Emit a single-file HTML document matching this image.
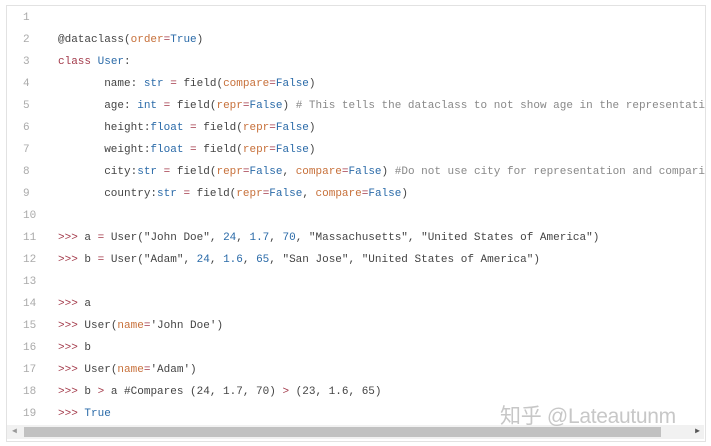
<!DOCTYPE html>
<html><head><meta charset="utf-8"><style>
body{margin:0;width:711px;height:446px;background:#fff;overflow:hidden;position:relative;font-family:"Liberation Mono",monospace;font-size:11px;color:#444}
.box{position:absolute;left:6px;top:5px;width:698px;height:435px;border:1px solid #e2e2e2;background:#fff;overflow:hidden}
.ln{position:absolute;left:0;width:1000px;height:22px;line-height:22px;white-space:pre}
.n{position:absolute;left:16px;color:#aaa;width:16px}
.c{position:absolute;left:51px}
.k{color:#a33a4a}.o{color:#c7703a}.b{color:#2a6aa8}.m{color:#888}
.sb{position:absolute;left:7px;top:425px;width:697px;height:14px;background:#f1f1f1}
.th{position:absolute;left:17px;top:2px;width:637px;height:10px;background:#c1c1c1}
.wm{position:absolute;left:500px;top:400px;font-family:"Liberation Sans","Noto Sans CJK SC",sans-serif;font-size:21px;letter-spacing:-0.3px;color:rgba(175,175,175,0.7)}
</style></head><body>
<div class="box">
<div class="ln" style="top:1px"><span class="n">1</span></div>
<div class="ln" style="top:23px"><span class="n">2</span><span class="c">@dataclass(<span class="o">order</span><span class="k">=</span><span class="b">True</span>)</span></div>
<div class="ln" style="top:45px"><span class="n">3</span><span class="c"><span class="k">class</span> <span class="b">User</span>:</span></div>
<div class="ln" style="top:67px"><span class="n">4</span><span class="c">       name: <span class="b">str</span> <span class="k">=</span> field(<span class="o">compare</span><span class="k">=</span><span class="b">False</span>)</span></div>
<div class="ln" style="top:89px"><span class="n">5</span><span class="c">       age: <span class="b">int</span> <span class="k">=</span> field(<span class="o">repr</span><span class="k">=</span><span class="b">False</span>) <span class="m"># This tells the dataclass to not show age in the representation</span></span></div>
<div class="ln" style="top:111px"><span class="n">6</span><span class="c">       height:<span class="b">float</span> <span class="k">=</span> field(<span class="o">repr</span><span class="k">=</span><span class="b">False</span>)</span></div>
<div class="ln" style="top:133px"><span class="n">7</span><span class="c">       weight:<span class="b">float</span> <span class="k">=</span> field(<span class="o">repr</span><span class="k">=</span><span class="b">False</span>)</span></div>
<div class="ln" style="top:155px"><span class="n">8</span><span class="c">       city:<span class="b">str</span> <span class="k">=</span> field(<span class="o">repr</span><span class="k">=</span><span class="b">False</span>, <span class="o">compare</span><span class="k">=</span><span class="b">False</span>) <span class="m">#Do not use city for representation and comparison</span></span></div>
<div class="ln" style="top:177px"><span class="n">9</span><span class="c">       country:<span class="b">str</span> <span class="k">=</span> field(<span class="o">repr</span><span class="k">=</span><span class="b">False</span>, <span class="o">compare</span><span class="k">=</span><span class="b">False</span>)</span></div>
<div class="ln" style="top:199px"><span class="n">10</span></div>
<div class="ln" style="top:221px"><span class="n">11</span><span class="c"><span class="k">&gt;&gt;&gt;</span> a <span class="k">=</span> User("John Doe", <span class="b">24</span>, <span class="b">1.7</span>, <span class="b">70</span>, "Massachusetts", "United States of America")</span></div>
<div class="ln" style="top:243px"><span class="n">12</span><span class="c"><span class="k">&gt;&gt;&gt;</span> b <span class="k">=</span> User("Adam", <span class="b">24</span>, <span class="b">1.6</span>, <span class="b">65</span>, "San Jose", "United States of America")</span></div>
<div class="ln" style="top:265px"><span class="n">13</span></div>
<div class="ln" style="top:287px"><span class="n">14</span><span class="c"><span class="k">&gt;&gt;&gt;</span> a</span></div>
<div class="ln" style="top:309px"><span class="n">15</span><span class="c"><span class="k">&gt;&gt;&gt;</span> User(<span class="o">name</span><span class="k">=</span>'John Doe')</span></div>
<div class="ln" style="top:331px"><span class="n">16</span><span class="c"><span class="k">&gt;&gt;&gt;</span> b</span></div>
<div class="ln" style="top:353px"><span class="n">17</span><span class="c"><span class="k">&gt;&gt;&gt;</span> User(<span class="o">name</span><span class="k">=</span>'Adam')</span></div>
<div class="ln" style="top:375px"><span class="n">18</span><span class="c"><span class="k">&gt;&gt;&gt;</span> b <span class="k">&gt;</span> a #Compares (24, 1.7, 70) <span class="k">&gt;</span> (23, 1.6, 65)</span></div>
<div class="ln" style="top:397px"><span class="n">19</span><span class="c"><span class="k">&gt;&gt;&gt;</span> <span class="b">True</span></span></div>
</div>
<div class="sb"><span style="position:absolute;left:5px;top:1px;font-size:8px;color:#999">◀</span><div class="th"></div><span style="position:absolute;right:4px;top:1px;font-size:8px;color:#555">▶</span></div>
<div class="wm">知乎 @Lateautunm</div>
</body></html>
